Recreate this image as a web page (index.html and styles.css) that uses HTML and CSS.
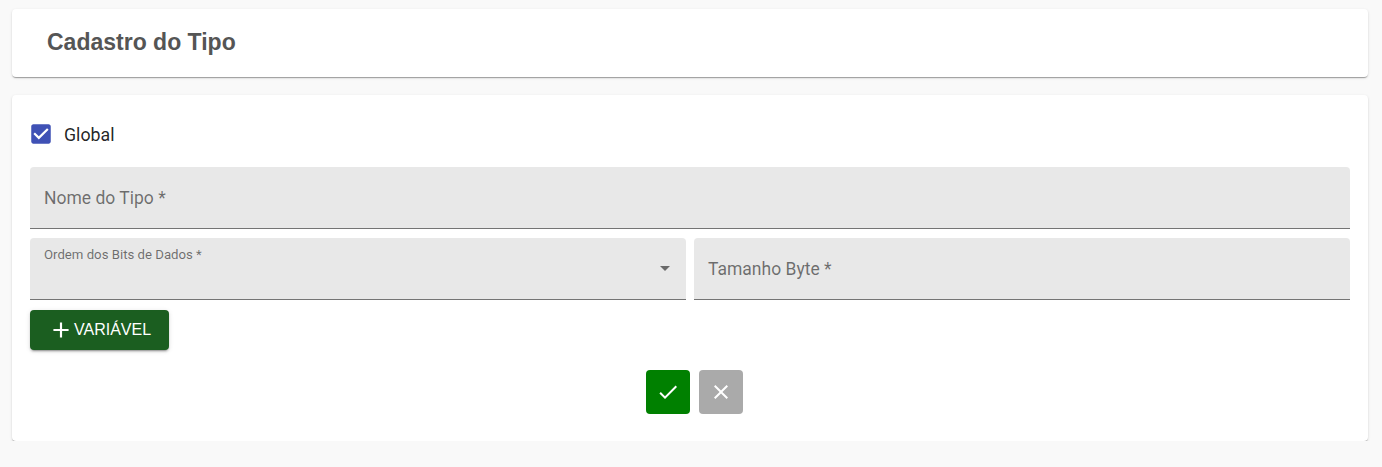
FILE: index.html
```html
<!DOCTYPE html>
<html lang="pt">
<head>
<meta charset="utf-8">
<link rel="stylesheet" href="styles.css">
<title>Cadastro do Tipo</title>
</head>
<body>
<div class="page">
  <div class="card header-card">
    <h1 class="title">Cadastro do Tipo</h1>
  </div>
  <div class="card form-card">
    <label class="check-row">
      <span class="checkbox">
        <svg viewBox="0 0 24 24" width="26" height="26"><path d="M19 3H5c-1.11 0-2 .9-2 2v14c0 1.1.89 2 2 2h14c1.11 0 2-.9 2-2V5c0-1.1-.89-2-2-2zm-9 14l-5-5 1.41-1.41L10 14.17l7.59-7.59L19 8l-9 9z" fill="#3f51b5"/></svg>
      </span>
      <span class="check-label">Global</span>
    </label>
    <div class="field full">
      <span class="field-label">Nome do Tipo *</span>
    </div>
    <div class="row">
      <div class="field select">
        <span class="field-label small">Ordem dos Bits de Dados *</span>
        <svg class="arrow" viewBox="0 0 24 24" width="24" height="24"><path d="M7 10l5 5 5-5z" fill="rgba(0,0,0,0.54)"/></svg>
      </div>
      <div class="field">
        <span class="field-label">Tamanho Byte *</span>
      </div>
    </div>
    <button class="btn-var">
      <svg viewBox="0 0 24 24" width="26" height="26"><path d="M19 13h-6v6h-2v-6H5v-2h6V5h2v6h6v2z" fill="#fff"/></svg>
      <span>VARIÁVEL</span>
    </button>
    <div class="actions">
      <button class="icon-btn ok">
        <svg viewBox="0 0 24 24" width="24" height="24"><path d="M9 16.17L4.83 12l-1.42 1.41L9 19 21 7l-1.41-1.41z" fill="#fff"/></svg>
      </button>
      <button class="icon-btn cancel">
        <svg viewBox="0 0 24 24" width="24" height="24"><path d="M19 6.41L17.59 5 12 10.59 6.41 5 5 6.41 10.59 12 5 17.59 6.41 19 12 13.41 17.59 19 19 17.59 13.41 12z" fill="#fff"/></svg>
      </button>
    </div>
  </div>
</div>
</body>
</html>
```

FILE: styles.css
```css
* { box-sizing: border-box; }
html, body { margin: 0; padding: 0; }
body {
  background: #f9f9f9;
  font-family: Roboto, "Liberation Sans", Arial, sans-serif;
}
.page {
  padding: 9px 14px 0 12px;
  display: flex;
  flex-direction: column;
  gap: 18px;
}
.card {
  background: #fff;
  border-radius: 4px;
  box-shadow: 0 2px 1px -1px rgba(0,0,0,0.2), 0 1px 1px 0 rgba(0,0,0,0.14), 0 1px 3px 0 rgba(0,0,0,0.12);
}
.header-card {
  height: 68px;
  padding: 0 35px;
  display: flex;
  align-items: center;
}
.title {
  margin: 0;
  font-family: "Liberation Sans", Arial, sans-serif;
  font-weight: bold;
  font-size: 23px;
  color: #555;
  position: relative;
  top: -1px;
}
.form-card {
  padding: 26px 18px 27px 18px;
  display: flex;
  flex-direction: column;
}
.check-row {
  display: flex;
  align-items: center;
  height: 26px;
  margin-bottom: 20px;
}
.checkbox {
  width: 26px;
  height: 26px;
  display: flex;
  align-items: center;
  justify-content: center;
  margin-left: -2px;
}
.check-label {
  margin-left: 10px;
  font-size: 17.8px;
  color: rgba(0,0,0,0.87);
}
.field {
  position: relative;
  background: #e8e8e8;
  border-top-left-radius: 4px;
  border-top-right-radius: 4px;
  border-bottom: 1px solid rgba(0,0,0,0.5);
  height: 62px;
  display: flex;
  align-items: center;
  padding: 0 14px;
  flex: 1;
}
.field.full { flex: none; margin-bottom: 9px; }
.field-label {
  font-size: 17.5px;
  color: rgba(0,0,0,0.54);
}
.field-label.small {
  font-size: 13.2px;
  position: absolute;
  left: 14px;
  top: 9px;
}
.arrow {
  position: absolute;
  right: 9px;
  top: 18px;
}
.row {
  display: flex;
  gap: 8px;
  margin-bottom: 10px;
}
.btn-var {
  align-self: flex-start;
  width: 139px;
  height: 40px;
  border: none;
  border-radius: 4px;
  background: #1b5e20;
  color: #fff;
  font-family: "Liberation Sans", Arial, sans-serif;
  font-size: 16px;
  display: flex;
  align-items: center;
  justify-content: flex-start;
  gap: 0;
  padding: 0 0 0 18px;
  box-shadow: 0 3px 1px -2px rgba(0,0,0,0.2), 0 2px 2px 0 rgba(0,0,0,0.14), 0 1px 5px 0 rgba(0,0,0,0.12);
}
.actions {
  display: flex;
  justify-content: center;
  gap: 9px;
  margin-top: 20px;
  padding-left: 9px;
}
.icon-btn {
  width: 44px;
  height: 44px;
  border: none;
  border-radius: 4px;
  display: flex;
  align-items: center;
  justify-content: center;
  padding: 0;
}
.icon-btn.ok { background: #008000; }
.icon-btn.cancel { background: #aaaaaa; }
```
